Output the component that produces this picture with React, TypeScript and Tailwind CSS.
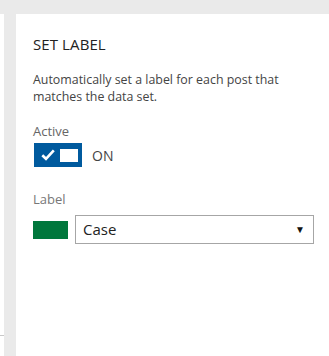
import React from "react";

export default function App() {
  return (
    <div
      className="w-[329px] h-[356px] bg-white flex flex-col overflow-hidden"
      style={{ fontFamily: '"Open Sans", "Noto Sans", sans-serif' }}
    >
      <div className="h-[14px] bg-[#eaeaea] shrink-0" />
      <div className="flex flex-1">
        <div className="w-[4px] bg-white flex flex-col">
          <div className="h-[321px]" />
          <div className="h-[1px] bg-[#c8c8c8]" />
        </div>
        <div className="w-[13px] bg-[#eaeaea]" />
        <div className="flex-1 bg-white pl-[17px] pr-[15px] pt-[20px]">
          <div className="text-[15px] leading-[20px] text-[#222] tracking-[0.1px]">SET LABEL</div>
          <div className="mt-[17px] text-[12.4px] leading-[17px] text-[#444]">
            Automatically set a label for each post that matches the data set.
          </div>
          <div className="mt-[17px] text-[13px] leading-[18px] text-[#666]">Active</div>
          <div className="mt-[3px] flex items-center">
            <div className="ml-[1px] w-[48px] h-[24px] bg-[#005a9e] flex items-center pl-[7px] pr-[4px]">
              <svg width="14" height="12" viewBox="0 0 14 12">
                <path d="M1.3 6.2 L5 9.8 L12.8 1.3" stroke="white" strokeWidth="2.6" fill="none" />
              </svg>
              <div className="ml-[5px] w-[18px] h-[13px] bg-white" />
            </div>
            <span className="ml-[10px] text-[14px] text-[#444]">ON</span>
          </div>
          <div className="mt-[23px] text-[13px] leading-[18px] text-[#777]">Label</div>
          <div className="mt-[7px] flex items-center">
            <div className="w-[35px] h-[18px] bg-[#00773c]" />
            <div className="ml-[7px] w-[239px] h-[29px] border border-[#a6a6a6] flex items-center justify-between pl-[7px] pr-[8px]">
              <span className="text-[15px] text-[#222]">Case</span>
              <span className="text-[10px] text-[#111]">▼</span>
            </div>
          </div>
        </div>
      </div>
    </div>
  );
}
